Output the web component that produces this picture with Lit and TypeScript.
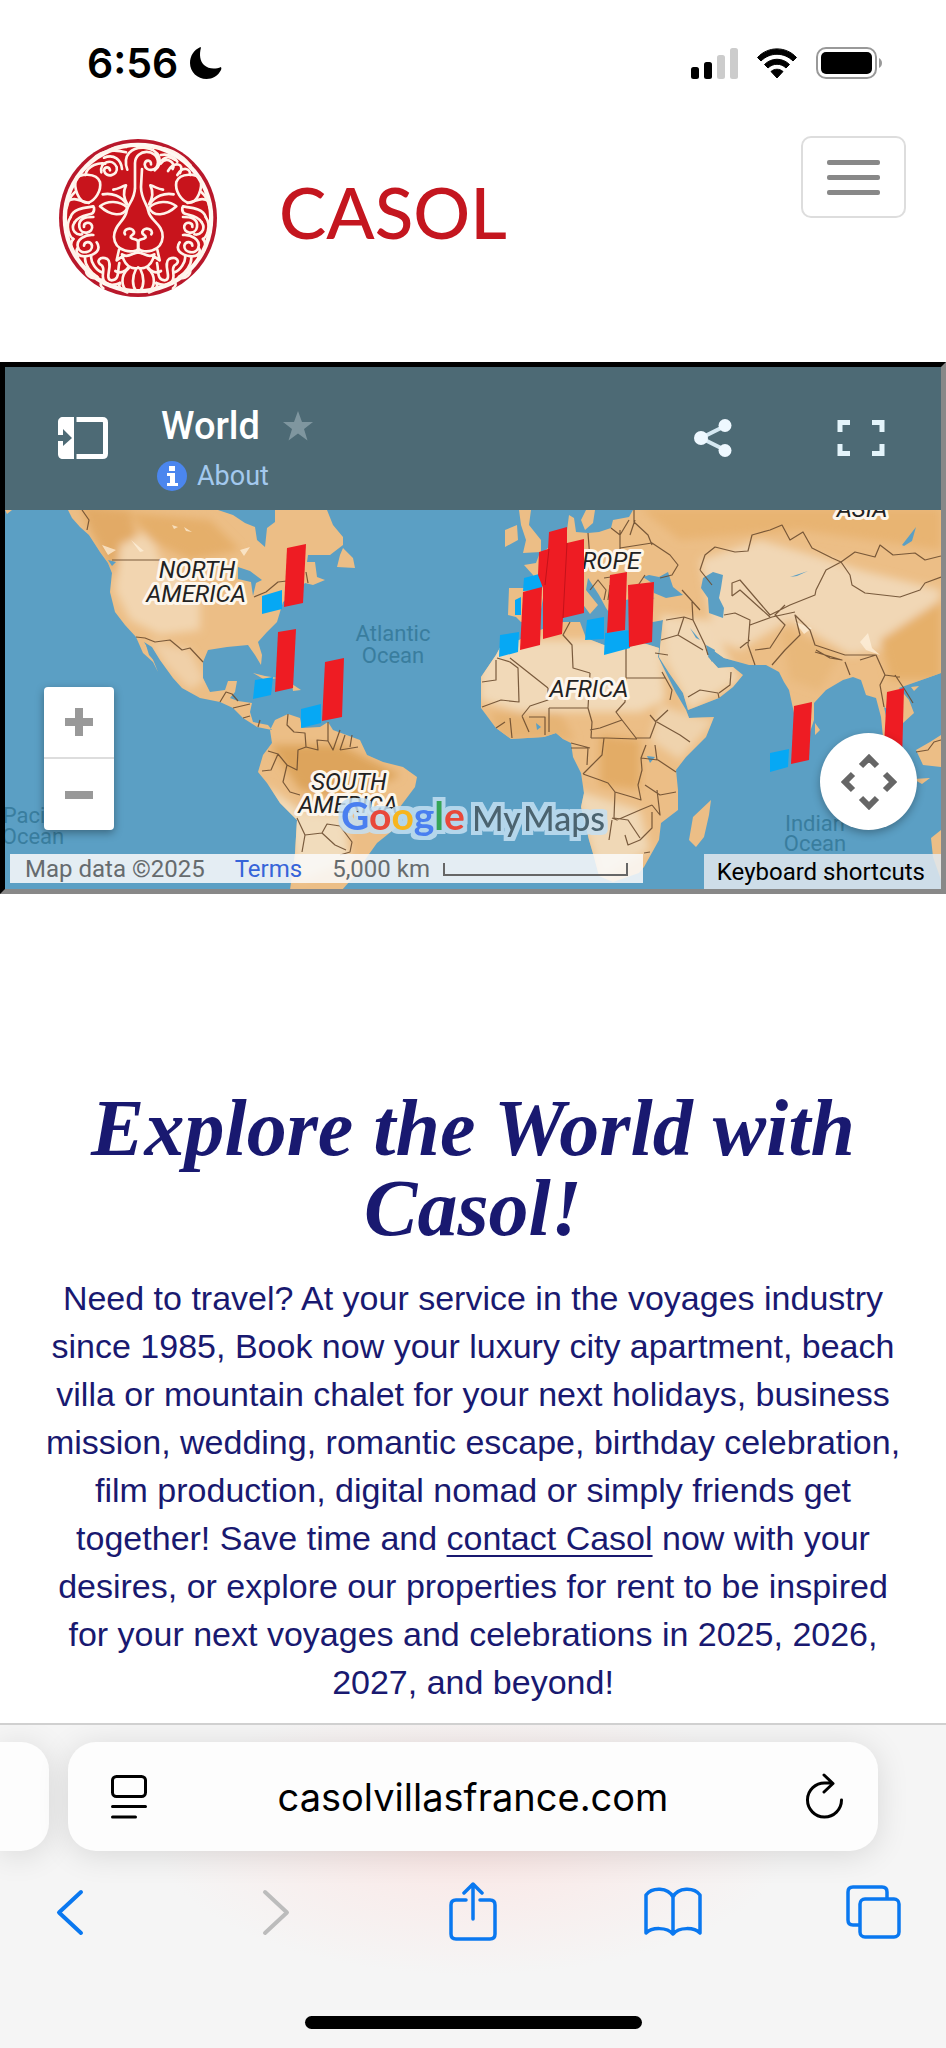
import { LitElement, html, css, svg } from "lit";
import { customElement } from "lit/decorators.js";

const RED_MARKERS = [
  "287,548 306,544 303,603 284,607",
  "278,632 296,629 293,688 275,692",
  "325,662 344,658 342,717 322,721",
  "549,532 567,527 567,543 584,539 584,613 563,618 562,634 543,639 543,588 538,575 539,552 548,549",
  "523,592 542,587 540,645 520,650",
  "610,575 627,572 625,630 607,633",
  "628,585 654,582 652,642 629,647",
  "794,706 812,702 809,760 791,764",
  "887,692 904,688 902,760 884,745",
];

const BLUE_MARKERS = [
  "262,596 282,590 282,609 262,614",
  "255,680 273,677 271,695 253,699",
  "301,709 321,704 321,723 301,728",
  "524,578 543,573 542,590 523,591",
  "515,600 521,597 521,615 515,615",
  "500,635 519,632 518,652 499,657",
  "587,620 604,617 604,639 585,640",
  "605,633 630,630 630,648 604,655",
  "770,753 789,749 788,767 770,772",
];

const LAND = [
  // North and Central America
  "M68 510 72 518 80 527 89 535 100 552 108 563 112 573 110 592 115 612 125 625 136 637 143 653 153 662 158 672 150 652 144 642 152 647 160 660 173 678 182 688 200 698 220 702 233 708 243 718 257 727 272 730 268 725 253 722 250 712 252 703 238 701 230 698 235 692 237 681 228 681 225 690 210 692 203 678 203 662 208 650 227 647 248 645 255 655 261 665 262 655 258 642 267 632 277 622 280 612 283 602 293 595 305 583 313 585 325 580 317 577 315 562 307 562 308 555 330 555 343 545 343 537 333 525 327 510 275 510 275 522 267 528 265 547 257 540 255 527 245 523 233 515 218 510Z",
  "M343 548 353 558 355 568 337 567 340 555Z",
  "M253 673 265 676 278 678 265 680Z M292 684 301 690 293 691Z",
  "M5 510 12 510 7 514Z",
  // South America
  "M270 730 275 720 288 714 300 718 302 728 320 727 328 722 333 730 360 740 367 755 383 762 403 767 417 777 415 787 400 807 397 827 377 843 367 857 357 873 342 890 290 890 295 853 297 820 280 803 267 783 258 772 263 755 272 743Z",
  // Europe and Asia
  "M633 510 629 517 613 520 611 528 599 532 588 533 576 532 574 518 569 515 566 538 548 548 539 555 536 563 524 565 533 575 538 588 509 588 508 615 516 617 521 622 539 620 543 598 566 588 576 595 590 614 598 605 586 590 588 578 599 595 606 608 613 618 621 612 626 600 640 596 655 598 640 602 633 618 653 622 663 620 661 638 659 657 669 673 683 693 688 710 719 698 733 687 743 675 733 667 718 668 708 657 710 648 724 658 749 665 766 665 779 672 784 682 789 690 794 713 803 737 810 732 814 720 814 703 826 690 843 680 853 677 861 680 866 695 876 698 881 717 883 737 891 740 884 707 893 712 903 723 914 713 909 700 899 688 913 683 941 673 941 510Z",
  "M586 510 595 510 593 523 585 530 581 520Z",
  "M519 510 531 510 529 525 541 540 541 552 523 553 526 540 521 525Z",
  "M505 530 517 525 518 540 505 547Z",
  // Africa
  "M659 648 643 643 626 648 604 645 586 638 580 622 563 622 540 630 519 640 503 642 496 655 481 677 481 708 496 728 511 739 544 737 556 733 563 739 571 743 573 757 581 773 584 793 581 807 589 840 594 857 599 876 613 882 639 873 644 867 659 840 661 823 678 810 678 790 676 770 686 757 706 737 714 717 689 718 686 710 676 693 666 673 658 657Z",
  "M711 800 709 815 704 837 696 847 689 840 693 817Z",
  "M815 723 820 730 815 735Z",
  "M916 750 930 742 941 735 941 767 923 765Z M913 779 930 778 922 784Z",
  "M941 830 931 838 933 857 941 880Z",
  "M911 687 919 686 914 691Z",
].join(" ");

const BORDERS = [
  "M82 510 89 520 87 530",
  "M112 560 160 560 M254 597 266 592 278 582 287 581 M306 572 308 583",
  "M136 637 145 638 155 642 170 640 182 650 190 648 203 662",
  "M220 702 226 692 232 694 238 701 M233 708 250 704 M243 718 250 716 M258 727 260 720",
  "M288 714 287 725 294 732 305 733 306 747 298 750 297 770 287 765 278 754 268 751",
  "M278 754 271 770 262 771 M287 765 283 782 290 792 300 795 M306 747 318 750 317 740 328 741 328 722 M328 741 333 750 340 730 M340 750 345 735 M350 747 352 735 M340 750 358 747 M297 818 305 835 302 852 M305 835 322 833 327 824 340 826 352 842 350 852 340 855",
  "M322 833 335 845 346 850",
  // Africa
  "M510 658 548 688 M497 658 510 662 518 668 519 702 501 700 482 707 M482 682 496 680 496 660 M548 688 548 700 530 706 522 716 M570 622 563 635 572 645 573 668 590 673 M626 648 626 678 665 678 M626 678 625 702 616 712 622 720 600 728 590 730 M590 673 588 708 592 722 591 738 M549 708 575 708 588 708 M549 708 549 732 M529 717 545 717 545 735 M522 716 529 732 M510 718 512 738 M496 728 505 722 M591 738 606 738 637 739 M622 720 636 738 650 738 656 722 650 715 M657 722 680 735 690 742 M668 710 655 722 M662 672 672 690 670 700 M604 738 602 755 592 765 583 774 M583 774 600 780 608 783 615 792 632 797 641 800 638 785 642 770 641 758 646 745 M641 758 658 760 676 772 M655 745 657 760 M612 818 617 820 640 810 652 805 M652 805 660 815 657 790 M645 785 660 795 676 792 M609 840 612 820 M625 835 628 845 640 840 652 828 652 812 M644 853 650 852 M571 748 588 748 587 765 M571 743 590 748",
  "M615 792 614 818 628 820 640 838",
  // Middle East and Asia
  "M666 620 684 617 678 635 661 640 M684 617 693 620 705 645 708 655 M678 635 703 650 M693 620 692 602 M655 653 668 655 M688 697 700 690 718 693 719 698 M719 693 730 685 731 672",
  "M588 533 590 560 M620 530 620 550 M611 528 620 535 629 520 M634 510 634 522 648 535 652 545 M620 548 652 543 670 555 678 565 672 575 660 578 M590 590 598 580 606 590 604 600 M604 578 625 575 M610 585 608 600 M635 520 630 535 M645 575 635 590 M682 590 700 610",
  "M700 570 705 555 715 547 735 552 748 551 752 535 770 530 782 525 790 540 803 532 812 548 832 558 841 562 826 570 816 590 815 595 790 605 770 615 740 580 732 583 732 596 M700 570 712 585",
  "M841 562 855 552 875 557 880 545 893 555 915 553 925 560 941 556 M841 562 850 575 852 585 865 593 900 597 920 590 925 583 941 577",
  "M732 596 740 590 770 617 M724 615 735 613 750 620 748 645 755 665 M755 650 770 648 785 625 775 615 785 605 M750 625 772 617 795 612 M772 665 785 650 800 635 795 615 810 630 815 645 845 655 860 655 876 655 M816 650 830 658 842 660 815 652 M845 662 850 675 M860 660 876 655 885 675 900 677 M885 675 880 685 884 707 M895 675 905 690 913 703 M750 640 740 648",
  "M916 752 928 750 934 742 941 740",
].join(" ");

@customElement("site-logo")
export class SiteLogo extends LitElement {
  static styles = css`
    :host { display: block; width: 160px; height: 160px; }
    svg { display: block; width: 100%; height: 100%; }
  `;

  private half() {
    return svg`
      <path d="M108 175C115 160 170 155 180 185C185 212 165 240 145 247C115 250 100 200 108 175Z"/>
      <path d="M180 258C200 240 240 240 262 262C250 290 212 288 180 258Z"/>
      <path d="M188 222C215 216 245 228 260 252M220 208C235 206 242 200 258 195C248 215 252 235 262 252"/>
      <path d="M255 342C246 328 275 316 282 334C284 345 270 344 272 351C280 360 293 354 295 366V390"/>
      <path d="M237 388L230 420L250 406M246 402C258 456 295 442 295 442M250 404C266 414 278 396 296 396"/>
      <path d="M266 444C240 466 243 502 264 512M288 446C276 470 276 496 288 512"/>
      <path d="M238 428C232 452 240 478 215 480C190 478 222 430 202 416C180 406 164 424 186 436C196 448 184 458 190 478C200 500 228 494 240 488"/>
      <path d="M226 452C242 462 258 452 264 442"/>
      <path d="M160 258C150 262 100 260 92 290M162 262C166 296 128 270 104 306M160 290C140 290 114 292 118 320C122 346 162 340 156 316C150 302 130 306 132 320"/>
      <path d="M104 306C88 330 112 346 126 342M92 290C72 320 92 352 100 356"/>
      <path d="M160 344C138 342 106 356 114 382C122 404 158 398 156 376C152 360 132 364 132 376"/>
      <path d="M114 382C102 396 118 410 136 408C170 404 184 386 170 366M136 408C130 432 156 460 172 470M154 406C150 424 170 452 186 456"/>
      <path d="M172 470C152 482 134 458 140 448M186 478C182 490 178 496 190 504M240 488C232 500 246 512 262 516"/>
      <path d="M100 356C86 370 96 400 114 410M82 244C104 226 120 244 146 248M106 214C92 226 84 240 80 262"/>
    `;
  }

  render() {
    return html`
      <svg viewBox="54 53 480 480" role="img" aria-label="Casol lion emblem">
        <circle cx="294" cy="293" r="237" fill="#b9182b" />
        <circle cx="294" cy="293" r="226" fill="#fff8f2" />
        <circle cx="294" cy="293" r="213" fill="#c8141c" />
        <g fill="none" stroke="#fff3ea" stroke-width="8" stroke-linecap="round" stroke-linejoin="round">
          ${this.half()}
          <g transform="translate(589 0) scale(-1 1)">${this.half()}</g>
          <path d="M136 164C142 134 180 126 196 130M184 156C178 124 218 112 230 140C236 168 196 174 192 150C194 138 208 138 210 150M192 112C222 100 244 118 246 146M150 128C172 92 216 84 258 96M204 92C222 80 240 78 258 80" />
          <path d="M362 104C384 100 400 106 412 124M362 130C380 106 410 128 398 146M384 152C402 122 436 128 420 158M412 164C428 136 452 144 450 164M340 82C380 78 424 100 452 136M366 120C376 108 392 110 404 118" />
          <path d="M262 148C246 104 276 80 312 82C362 86 372 132 344 150M285 206V128C287 84 352 84 354 126C352 154 316 156 314 132C316 116 334 118 333 132M306 146L303 200C303 236 322 252 325 272C330 302 370 312 368 350C365 396 310 400 296 386C283 400 224 396 222 350C222 312 256 302 260 272C262 252 285 240 285 200" />
        </g>
      </svg>
    `;
  }
}

@customElement("status-bar")
export class StatusBar extends LitElement {
  static styles = css`
    :host {
      display: flex;
      align-items: center;
      justify-content: space-between;
      height: 64px;
      padding: 31px 64px 25px 87px;
      font-family: Inter, "Liberation Sans", sans-serif;
    }
    .left, .right { display: flex; align-items: center; }
    .left { gap: 12px; }
    .right { gap: 19px; }
    .time { font-size: 41px; line-height: 48px; font-weight: 600; }
    svg { display: block; }
  `;

  render() {
    return html`
      <div class="left">
        <span class="time">6:56</span>
        <svg width="32" height="32" viewBox="0 0 32 32" aria-hidden="true">
          <path d="M11 0.5C9 8 10 14 14 18C18.500 22 25 22.500 31 20C31.500 21 31.500 22 31 23C28 29 22.500 32 16.500 32C7.500 32 0 25 0 16C0 9 4 3 10 .3C10.500 0 11 .2 11 .5Z" />
        </svg>
      </div>
      <div class="right">
        <svg width="47" height="32" viewBox="0 0 47 32" aria-hidden="true">
          <rect x="0" y="20" width="8" height="12" rx="2.500" />
          <rect x="13" y="15" width="8" height="17" rx="2.500" />
          <rect x="26" y="8" width="8" height="24" rx="2.500" fill="#ccc" />
          <rect x="39" y="1" width="8" height="31" rx="2.500" fill="#ccc" />
        </svg>
        <svg width="40" height="32" viewBox="0 0 40 32" aria-hidden="true">
          <path d="M.5 10.500C11 -1 29 -1 39.500 10.500L36 14C27 5 13 5 4 14ZM7.500 17.500C14.500 10.500 25.500 10.500 32.500 17.500L29 21C24 16 16 16 11 21ZM14 24.500C17.500 21.500 22.500 21.500 26 24.500L20 31Z" stroke="#000" stroke-linejoin="round" />
        </svg>
        <svg width="66" height="32" viewBox="0 0 66 32" aria-hidden="true">
          <rect x="1" y="1" width="59" height="30" rx="9" fill="none" stroke="#999" stroke-width="2" />
          <rect x="5" y="5" width="51" height="22" rx="5" />
          <path d="M63 11C67 13 67 19 63 21Z" fill="#999" />
        </svg>
      </div>
    `;
  }
}

@customElement("world-map")
export class WorldMap extends LitElement {
  static styles = css`
    :host {
      display: block;
      border: 5px solid;
      border-color: #000 #888 #888 #000;
      font-family: Roboto, "Liberation Sans", sans-serif;
    }
    svg { display: block; }
    button {
      display: flex;
      align-items: center;
      justify-content: center;
      margin: 0;
      padding: 0;
      border: 0;
      background: none;
      font: inherit;
      color: inherit;
    }
    a { text-decoration: none; }
    .bar {
      display: flex;
      align-items: center;
      height: 141px;
      padding: 0 56px 2px 53px;
      background: #4d6a75;
      color: #fff;
    }
    .titles {
      flex: 1;
      display: flex;
      flex-direction: column;
      gap: 13px;
      padding: 20px 0 0 49px;
    }
    .row { display: flex; align-items: center; gap: 22px; }
    .about { display: flex; align-items: center; gap: 10px; color: #a3c9ee; font-size: 27px; line-height: 30px; }
    h2 { margin: 0; padding-left: 4px; font-size: 38px; line-height: 44px; font-weight: 500; }
    .actions { display: flex; align-items: center; gap: 105px; }
    .canvas { position: relative; height: 379px; overflow: hidden; background: #5b9fc4; }
    .world { width: 100%; height: 100%; }
    .continent {
      font-size: 24px;
      font-style: italic;
      font-weight: 400;
      fill: #222;
      stroke: #fdf6ec;
      stroke-width: 6px;
      stroke-linejoin: round;
      paint-order: stroke;
    }
    .ocean { font-size: 22px; fill: #397d9e; }
    .brand { font-family: Lato, "Open Sans", sans-serif; }
    .google { font-size: 39px; font-weight: 700; }
    .mymaps { font-size: 34px; font-weight: 500; fill: #4b636f; }
    .zoom {
      position: absolute;
      left: 39px;
      bottom: 59px;
      width: 70px;
      background: #fff;
      border-radius: 4px;
      box-shadow: 0 3px 8px rgba(0, 0, 0, 0.35);
    }
    .zoom button { width: 100%; height: 70px; }
    .zoom button + button { height: 73px; border-top: 2px solid #ddd; }
    .pan {
      position: absolute;
      right: 24px;
      bottom: 59px;
      width: 97px;
      height: 97px;
      border-radius: 50%;
      background: #fff;
      box-shadow: 0 3px 8px rgba(0, 0, 0, 0.3);
    }
    .legal {
      position: absolute;
      left: 5px;
      bottom: 6px;
      display: flex;
      align-items: center;
      gap: 30px;
      height: 27px;
      padding: 2px 15px 0;
      background: rgba(250, 250, 250, 0.86);
      color: #666b6e;
      font-size: 24px;
      line-height: 27px;
    }
    .legal a { color: #3664d9; }
    .scale { display: flex; align-items: center; gap: 13px; }
    .ruler { width: 181px; height: 11px; border: 2px solid #666; border-top: 0; }
    .keys {
      position: absolute;
      right: 0;
      bottom: 0;
      height: 35px;
      padding: 0 16px 0 13px;
      background: rgba(225, 232, 237, 0.86);
      color: #000;
      font-size: 24px;
      line-height: 28px;
    }
  `;

  render() {
    return html`
      <div class="bar">
        <button aria-label="Show legend">
          <svg width="50" height="42" viewBox="0 0 50 42" fill="#fff">
            <path d="M5 0H16V42H5C2 42 0 40 0 37V24H5V29L14 21L5 12V18H0V5C0 2 2 0 5 0Z" />
            <path d="M18.500 2.500H44.500C46.500 2.500 47.500 3.500 47.500 5.500V36.500C47.500 38.500 46.500 39.500 44.500 39.500H18.500" fill="none" stroke="#fff" stroke-width="5" />
          </svg>
        </button>
        <div class="titles">
          <div class="row">
            <h2>World</h2>
            <svg width="32" height="30" viewBox="0 0 32 30" fill="#7f969f" role="img" aria-label="Star">
              <path d="M16 0L20 11H31L22 18L25.500 29.500L16 22.500L6.500 29.500L10 18L1 11H12Z" />
            </svg>
          </div>
          <a class="about" href="#about">
            <svg width="30" height="30" viewBox="0 0 30 30" aria-hidden="true">
              <circle cx="15" cy="15" r="15" fill="#4b86ee" />
              <path d="M12 5H18V10H12ZM10 12H18V22H21V25H10V22H13V15H10Z" fill="#fff" />
            </svg>
            About
          </a>
        </div>
        <div class="actions">
          <button aria-label="Share">
            <svg width="38" height="38" viewBox="0 0 38 38" fill="#eef8ff">
              <path d="M31 7L7 19L31 31" fill="none" stroke="#d5e8f2" stroke-width="4" />
              <circle cx="31" cy="6.500" r="6.500" /><circle cx="7" cy="19" r="7" /><circle cx="31" cy="31.500" r="6.500" />
            </svg>
          </button>
          <button aria-label="View full screen">
            <svg width="48" height="38" viewBox="0 0 48 38" fill="none" stroke="#e4f4fb" stroke-width="5">
              <path d="M3 13V3.500H13M35 3.500H45V13M45 25V34.500H35M13 34.500H3V25" />
            </svg>
          </button>
        </div>
      </div>
      <div class="canvas">
        <svg class="world" viewBox="5 510 936 379" preserveAspectRatio="xMidYMid slice" role="img" aria-label="World map with property locations">
          <defs>
            <clipPath id="land"><path d=${LAND} /></clipPath>
            <filter id="soft" x="-20%" y="-20%" width="140%" height="140%"><feGaussianBlur stdDeviation="4" /></filter>
            <filter id="halo" x="-10%" y="-30%" width="120%" height="160%" color-interpolation-filters="sRGB">
              <feMorphology in="SourceAlpha" operator="dilate" radius="4" result="grown" />
              <feFlood flood-color="#c4e0f2" flood-opacity="0.85" />
              <feComposite in2="grown" operator="in" result="glow" />
              <feMerge><feMergeNode in="glow" /><feMergeNode in="SourceGraphic" /></feMerge>
            </filter>
          </defs>
          <path d=${LAND} fill="#ecbe86" />
          <g clip-path="url(#land)">
            <g filter="url(#soft)">
              <path d="M80 505 130 510 140 560 125 600 112 570 90 530Z" fill="#e2aa66" />
              <path d="M120 545 150 530 160 560 200 590 200 630 160 635 130 620 115 590Z" fill="#f2d5b0" />
              <path d="M130 512 210 520 240 550 190 560 150 540Z" fill="#e5af6b" />
              <path d="M150 640 190 650 205 680 190 690 165 665Z" fill="#f0d0a8" />
              <path d="M270 745 340 745 400 775 350 800 300 790Z" fill="#dda45c" />
              <path d="M265 785 300 810 345 815 350 860 300 880 290 830Z" fill="#f1dcbc" />
              <path d="M480 640 660 640 665 700 640 712 520 712 480 700Z" fill="#f1d9b8" />
              <path d="M600 735 640 740 640 790 600 785Z" fill="#e3ac66" />
              <path d="M575 790 640 810 650 850 600 880Z" fill="#f0d8b6" />
              <path d="M660 705 690 715 715 720 680 760 650 740Z" fill="#efd3ad" />
              <path d="M490 712 560 712 575 740 500 740Z" fill="#e6b475" />
              <path d="M660 615 710 620 740 680 690 710 665 660Z" fill="#f1d8b6" />
              <path d="M700 560 760 540 830 560 860 570 941 590 930 640 850 655 790 620 740 650 715 640Z" fill="#f1d7b5" />
              <path d="M640 508 941 508 941 550 800 530 680 540Z" fill="#e8b472" />
              <path d="M880 640 941 600 941 680 890 680Z" fill="#e6b06a" />
              <path d="M780 625 840 655 820 690 790 680Z" fill="#e8b87a" />
            </g>
            <g fill="#fff2de" opacity="0.7">
              <path d="M131 540 144 551 140 552ZM102 545 116 550 108 555ZM172 525 178 527 174 529ZM184 527 192 532 186 531ZM240 550 250 547 244 556ZM860 642 868 633 872 648 880 655 866 650ZM795 622 812 628 804 634Z" />
            </g>
          </g>
          <g fill="#5b9fc4">
            <path d="M643 577 652 583 654 593 666 598 683 595 673 587 668 572 659 577 649 575ZM703 578 713 572 723 575 721 588 719 598 724 608 723 618 709 613 708 598 701 588Z" />
            <path d="M238 567 250 571 262 580 256 583 253 596 251 582 238 579ZM108 560 116 562 112 566ZM790 577 808 571 797 576ZM902 545 916 527 912 541 904 546ZM690 628 700 640 696 638ZM647 756 655 757 650 763ZM536 723 541 727 537 730ZM706 645 715 650 712 662 708 655ZM146 645 151 650 156 663 149 655Z" />
          </g>
          <path d=${BORDERS} fill="none" stroke="#6b4c30" stroke-width="1.200" stroke-linejoin="round" opacity="0.9" />
          <g class="ocean" text-anchor="middle">
            <text x="393" y="641">Atlantic</text><text x="393" y="663">Ocean</text>
            <text x="815" y="831">Indian</text><text x="815" y="851">Ocean</text>
            <text x="36" y="823">Pacific</text><text x="33" y="844">Ocean</text>
          </g>
          <g class="continent" text-anchor="middle">
            <text x="197" y="578">NORTH</text><text x="196" y="602">AMERICA</text>
            <text x="349" y="790">SOUTH</text><text x="348" y="813">AMERICA</text>
            <text x="597" y="569">EUROPE</text>
            <text x="589" y="697">AFRICA</text>
            <text x="862" y="517">ASIA</text>
          </g>
          <g fill="#06a8f4">${BLUE_MARKERS.map((p) => svg`<polygon points=${p} />`)}</g>
          <g fill="#ee1c23">${RED_MARKERS.map((p) => svg`<polygon points=${p} />`)}</g>
          <path d="M567 543 563 618M549 549 545 585" fill="none" stroke="#c4121a" />
          <g class="brand" filter="url(#halo)">
            <text class="google" x="341" y="830"><tspan fill="#4a7ff0">G</tspan><tspan fill="#e8483a">o</tspan><tspan fill="#f7b51e">o</tspan><tspan fill="#4a7ff0">g</tspan><tspan fill="#35a556">l</tspan><tspan fill="#e8483a">e</tspan></text>
            <g class="mymaps"><text x="472" y="831">My</text><text x="523" y="831">Maps</text></g>
          </g>
        </svg>
        <div class="zoom">
          <button aria-label="Zoom in">
            <svg width="28" height="28" viewBox="0 0 28 28" stroke="#999" stroke-width="8"><path d="M0 14H28M14 0V28" /></svg>
          </button>
          <button aria-label="Zoom out">
            <svg width="28" height="28" viewBox="0 0 28 28" stroke="#999" stroke-width="8"><path d="M0 14H28" /></svg>
          </button>
        </div>
        <button class="pan" aria-label="Map camera controls">
          <svg width="56" height="56" viewBox="0 0 56 56" fill="none" stroke="#666" stroke-width="6">
            <path d="M20 12L28 4L36 12M20 44L28 52L36 44M12 20L4 28L12 36M44 20L52 28L44 36" />
          </svg>
        </button>
        <div class="legal">
          <span>Map data ©2025</span>
          <a href="#terms">Terms</a>
          <span class="scale">5,000 km <span class="ruler"></span></span>
        </div>
        <button class="keys">Keyboard shortcuts</button>
      </div>
    `;
  }
}

@customElement("browser-bar")
export class BrowserBar extends LitElement {
  static styles = css`
    :host {
      display: block;
      border-top: 2px solid #d0d0d0;
      background: radial-gradient(ellipse 320px 140px at 50% 110px, #fbe6e4, rgba(251, 230, 228, 0)) #f5f5f5;
      overflow: hidden;
      font-family: Inter, "Liberation Sans", sans-serif;
    }
    svg { display: block; }
    button {
      display: flex;
      align-items: center;
      justify-content: center;
      margin: 0;
      padding: 0;
      border: 0;
      background: none;
      color: inherit;
    }
    .tabs { display: flex; gap: 19px; padding: 17px 68px 0 0; }
    .previous, .address {
      height: 109px;
      background: #fdfdfd;
      box-shadow: 0 4px 32px rgba(0, 0, 0, 0.12);
    }
    .previous { width: 49px; border-radius: 0 28px 28px 0; }
    .address {
      flex: 1;
      display: flex;
      align-items: center;
      padding: 0 32px 0 40px;
      border-radius: 28px;
    }
    .address input {
      flex: 1;
      min-width: 0;
      height: 56px;
      padding: 0 8px 0 0;
      border: 0;
      outline: 0;
      background: none;
      font-family: inherit;
      font-size: 38px;
      text-align: center;
      color: #000;
    }
    .tools {
      display: flex;
      justify-content: space-between;
      padding: 29px 33px 0 30px;
      color: #0a78f0;
    }
    .tools button { width: 80px; height: 64px; }
    .tools .off { color: #bcbcbc; }
    .home { width: 337px; height: 13px; margin: 72px auto 19px; border-radius: 7px; background: #000; }
  `;

  render() {
    return html`
      <div class="tabs">
        <div class="previous"></div>
        <div class="address">
          <button aria-label="Page menu">
            <svg width="44" height="44" viewBox="0 0 44 44" fill="none" stroke="#000" stroke-width="3" stroke-linecap="round">
              <rect x="4.500" y="1.500" width="33" height="20" rx="4" /><path d="M4.500 31.500H37.500M4.500 42H27.500" />
            </svg>
          </button>
          <input type="text" aria-label="Address" value="casolvillasfrance.com" />
          <button aria-label="Reload">
            <svg width="44" height="48" viewBox="0 0 44 48" fill="none" stroke="#000" stroke-width="3" stroke-linecap="round" stroke-linejoin="round">
              <path d="M39.500 27A17 17 0 1 1 23 10H30M22 2L31 10.500L22 19" />
            </svg>
          </button>
        </div>
      </div>
      <div class="tools">
        <button aria-label="Back">
          <svg width="60" height="60" viewBox="0 0 60 60" fill="none" stroke="currentColor" stroke-width="4" stroke-linecap="round" stroke-linejoin="round"><path d="M41 10L19 30.500L41 51" /></svg>
        </button>
        <button class="off" aria-label="Forward" disabled>
          <svg width="60" height="60" viewBox="0 0 60 60" fill="none" stroke="currentColor" stroke-width="4" stroke-linecap="round" stroke-linejoin="round"><path d="M24 10L46 30.500L24 51" /></svg>
        </button>
        <button aria-label="Share">
          <svg width="60" height="60" viewBox="0 0 60 60" fill="none" stroke="currentColor" stroke-width="3.500" stroke-linecap="round" stroke-linejoin="round"><path d="M24 18H14Q9 18 9 23V52Q9 57 14 57H48Q53 57 53 52V23Q53 18 48 18H38M31 37V2M22 11L31 2L40 11" /></svg>
        </button>
        <button aria-label="Bookmarks">
          <svg width="60" height="60" viewBox="0 0 60 60" fill="none" stroke="currentColor" stroke-width="3.500" stroke-linecap="round" stroke-linejoin="round"><path d="M31 15C26 5 10 5 4 13V51C10 45 25 45 31 52C37 45 52 45 58 51V13C52 5 36 5 31 15ZM31 15V52" /></svg>
        </button>
        <button aria-label="Tabs">
          <svg width="60" height="60" viewBox="0 0 60 60" fill="none" stroke="currentColor" stroke-width="3.500" stroke-linejoin="round"><rect x="17" y="17" width="39" height="38" rx="5" /><path d="M17 43H10Q5 43 5 38V10Q5 5 10 5H39Q44 5 44 10V17" /></svg>
        </button>
      </div>
      <div class="home"></div>
    `;
  }
}

@customElement("app-root")
export class AppRoot extends LitElement {
  static styles = css`
    :host {
      display: flex;
      flex-direction: column;
      min-height: 100vh;
      background: #fff;
      color: #000;
    }
    main { flex: 1; }
    .header {
      display: flex;
      align-items: flex-start;
      justify-content: space-between;
      height: 226px;
      padding: 16px 40px 0 58px;
    }
    .brand {
      display: flex;
      align-items: center;
      gap: 61px;
      padding-top: 2px;
      color: #c4161f;
      text-decoration: none;
      font-family: Lato, "Open Sans", sans-serif;
      font-size: 71px;
      line-height: 80px;
      font-weight: 500;
    }
    .brand span { padding-bottom: 12px; }
    .menu {
      display: flex;
      flex-direction: column;
      align-items: center;
      justify-content: center;
      gap: 10px;
      width: 105px;
      height: 82px;
      margin: 0;
      padding: 0;
      border: 2px solid #ddd;
      border-radius: 10px;
      background: #fff;
    }
    .menu span { width: 53px; height: 5px; border-radius: 2px; background: #888; }
    .intro { padding: 194px 40px 8px; text-align: center; color: #191970; }
    h1 {
      margin: 0 0 26px;
      font-family: "Liberation Serif", serif;
      font-size: 80px;
      line-height: 80px;
      font-style: italic;
      font-weight: 700;
    }
    p {
      margin: 0;
      font-family: "Liberation Sans", sans-serif;
      font-size: 34px;
      line-height: 48px;
    }
    p a { color: inherit; text-decoration: underline; text-decoration-thickness: 2px; text-underline-offset: 5px; }
  `;

  render() {
    return html`
      <status-bar></status-bar>
      <main>
        <header class="header">
          <a class="brand" href="#home"><site-logo></site-logo><span>CASOL</span></a>
          <button class="menu" aria-label="Toggle navigation"><span></span><span></span><span></span></button>
        </header>
        <world-map></world-map>
        <section class="intro">
          <h1>Explore the World with Casol!</h1>
          <p>
            Need to travel? At your service in the voyages industry since 1985, Book now your luxury city apartment,
            beach villa or mountain chalet for your next holidays, business mission, wedding, romantic escape, birthday
            celebration, film production, digital nomad or simply friends get together! Save time and
            <a href="#contact">contact Casol</a> now with your desires, or explore our properties for rent to be
            inspired for your next voyages and celebrations in 2025, 2026, 2027, and beyond!
          </p>
        </section>
      </main>
      <browser-bar></browser-bar>
    `;
  }
}
